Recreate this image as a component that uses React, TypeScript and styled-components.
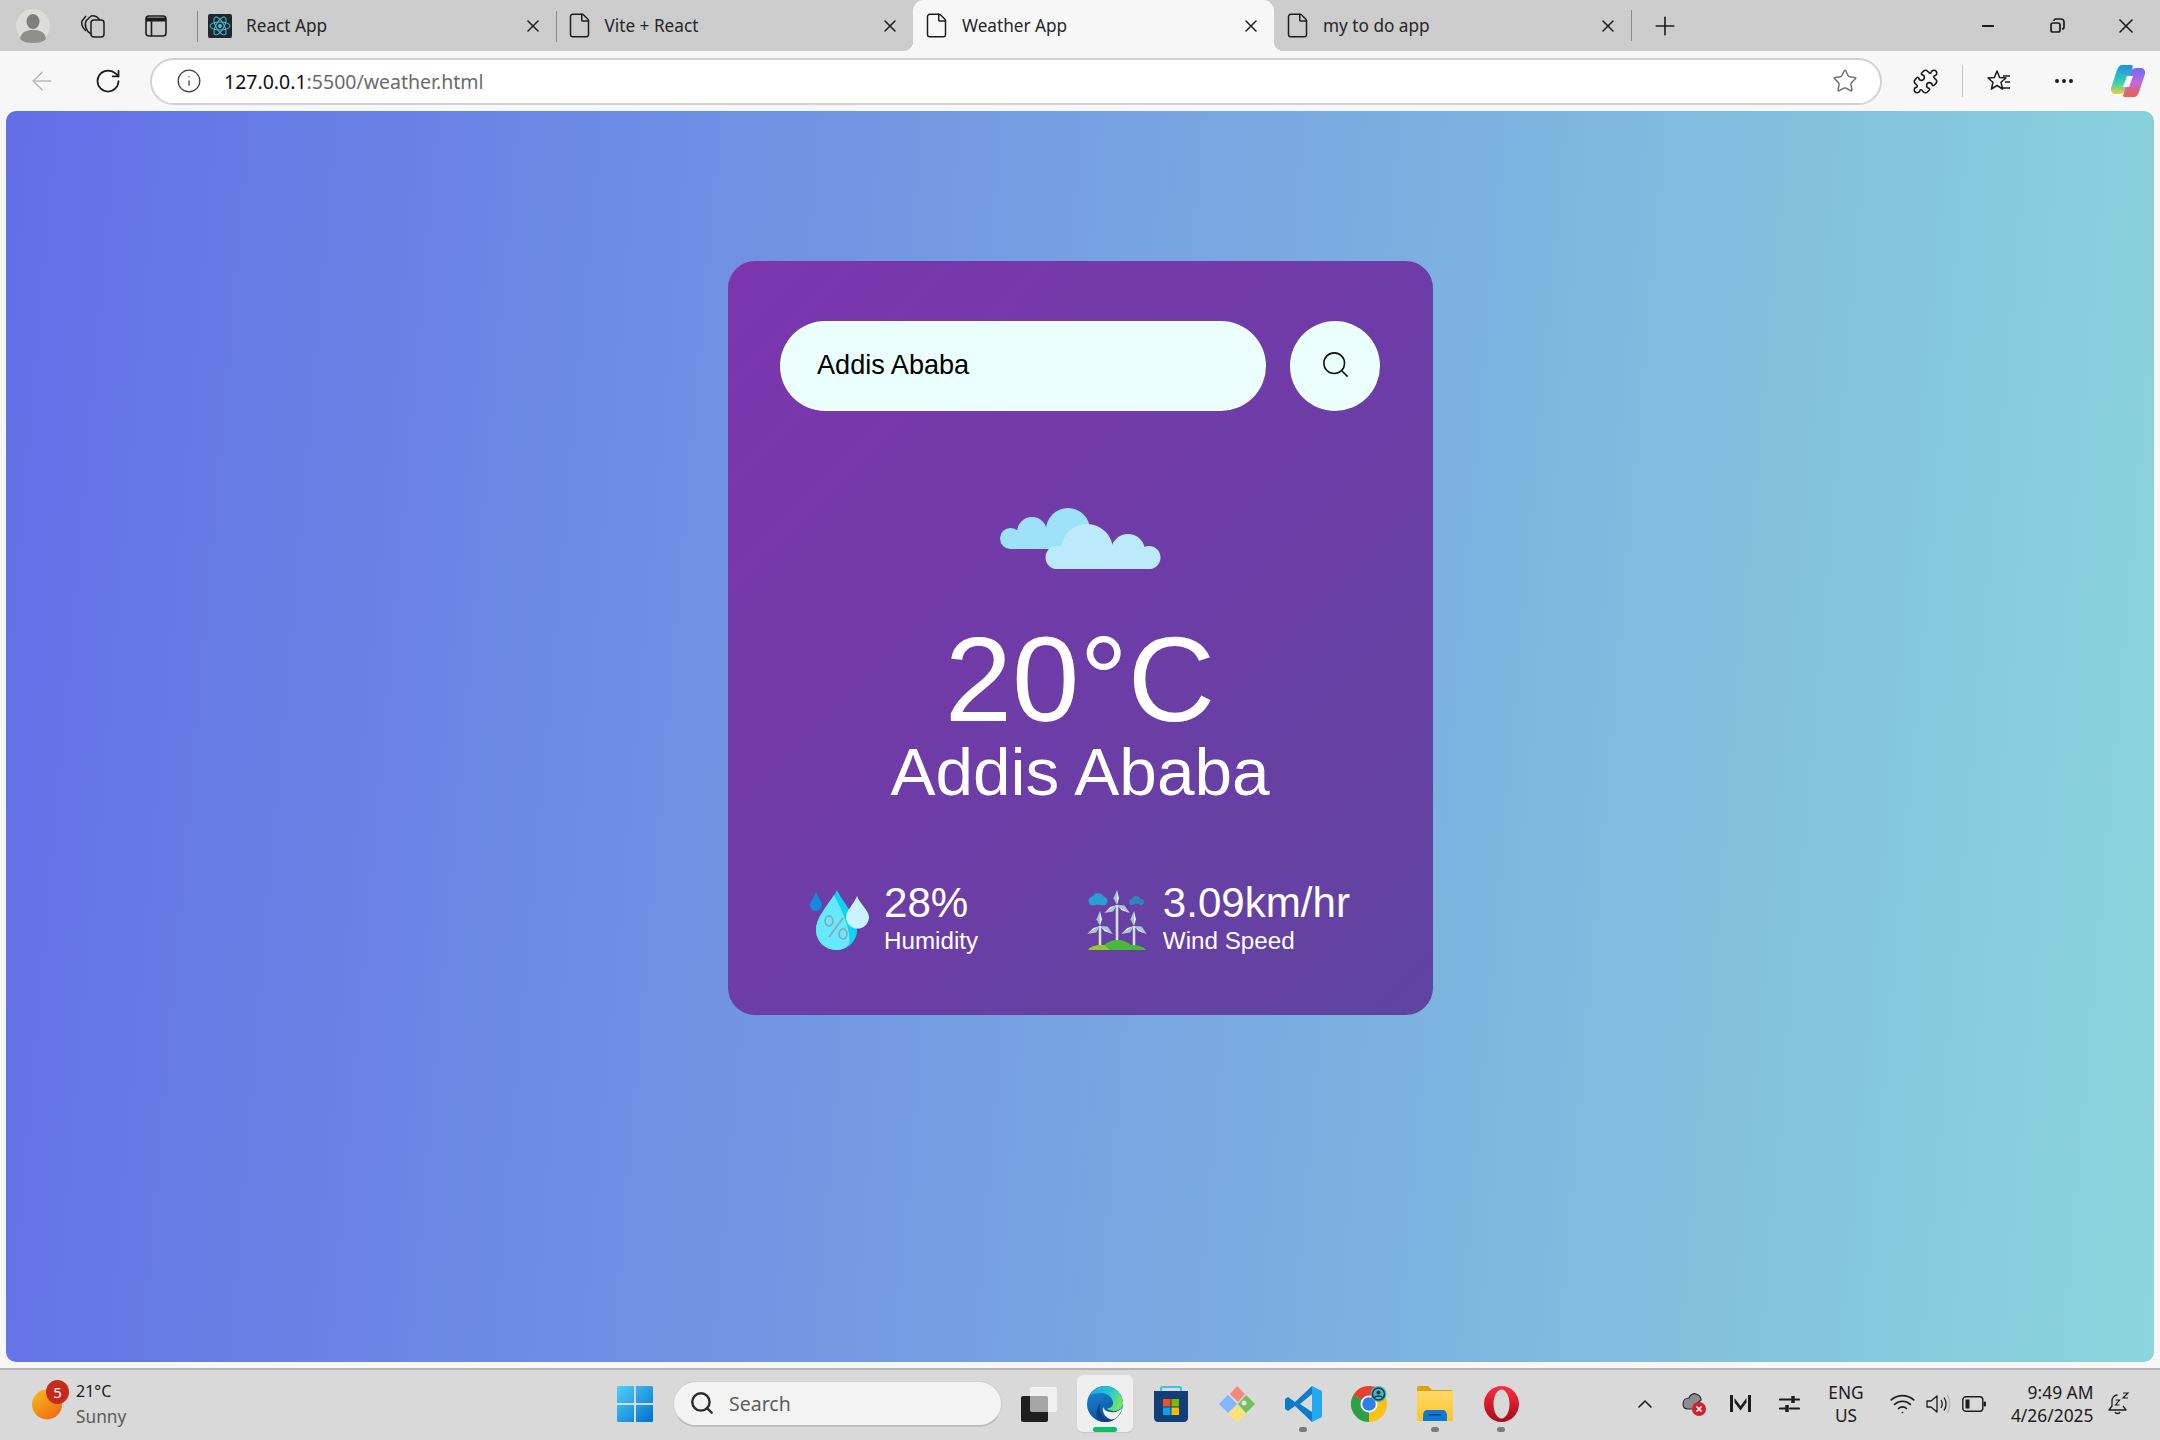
import styled, { createGlobalStyle } from "styled-components";
import {
  ArrowLeft,
  ChevronUp,
  Ellipsis,
  File,
  Info,
  Minus,
  Plus,
  Puzzle,
  RotateCw,
  Search,
  Star,
  Wifi,
  X,
} from "lucide-react";

const GlobalStyle = createGlobalStyle`
  html, body {
    margin: 0;
    padding: 0;
    height: 100%;
  }
  body {
    font-family: "Noto Sans", "Liberation Sans", sans-serif;
    background: #f7f7f7;
  }
`;

const tabs = [
  { id: "react", title: "React App", width: 358.5, active: false, favicon: true },
  { id: "vite", title: "Vite + React", width: 357.5, active: false, favicon: false },
  { id: "weather", title: "Weather App", width: 361, active: true, favicon: false },
  { id: "todo", title: "my to do app", width: 357, active: false, favicon: false },
];

function ReactFavicon() {
  return (
    <svg width="24" height="24" viewBox="0 0 24 24">
      <rect width="24" height="24" rx="2" fill="#20262e" />
      <g fill="none" stroke="#4fc3dc" strokeWidth="1">
        <ellipse cx="12" cy="12" rx="10" ry="4" />
        <ellipse cx="12" cy="12" rx="10" ry="4" transform="rotate(60 12 12)" />
        <ellipse cx="12" cy="12" rx="10" ry="4" transform="rotate(120 12 12)" />
      </g>
      <circle cx="12" cy="12" r="2" fill="#4fc3dc" />
    </svg>
  );
}

function AvatarIcon() {
  return (
    <svg width="34" height="34" viewBox="0 0 34 34">
      <circle cx="17" cy="17" r="17" fill="#dcdcd8" />
      <ellipse cx="17" cy="12.5" rx="6.5" ry="7.5" fill="#7e7e7c" />
      <path d="M4 30c1-7 6-9 13-9s12 2 13 9c-3 3-8 4-13 4s-10-1-13-4z" fill="#8f8f8c" />
    </svg>
  );
}

function CollectionsIcon() {
  return (
    <svg width="26" height="26" viewBox="0 0 26 26" fill="none" stroke="#1c1c1c" strokeWidth="1.5">
      <rect x="11" y="7" width="13" height="17" rx="3" />
      <path d="M11 21c-2-1-4-3-5-6-1-3-1-5 0-7l5-5c2-1 4 0 6 1l3 3" />
      <path d="M6 18C3 15 1 11 2 8l4-5" />
    </svg>
  );
}

function VerticalTabsIcon() {
  return (
    <svg width="22" height="22" viewBox="0 0 22 22" fill="none" stroke="#1c1c1c" strokeWidth="1.6">
      <rect x="1" y="1" width="20" height="20" rx="3" />
      <path d="M1 4.500h20" strokeWidth="4" />
      <path d="M6.500 6v15" />
    </svg>
  );
}

function RestoreIcon() {
  return (
    <svg width="16" height="16" viewBox="0 0 16 16" fill="none" stroke="#1c1c1c" strokeWidth="1.7">
      <rect x="2" y="5" width="9" height="9" rx="2" />
      <path d="M5 3c0-1 1-2 2-2h5c1.500 0 3 1.500 3 3v5c0 1-1 2-2 2" />
    </svg>
  );
}

function FavoritesIcon() {
  return (
    <svg width="26" height="26" viewBox="0 0 26 26" fill="none" stroke="#1c1c1c" strokeWidth="1.5">
      <path d="M11 3l2.600 6.500 6.400.5-5 4.300 1.600 6.700L11 17.500 5.400 21 7 14.300 2 10l6.400-.5z" strokeLinejoin="round" />
      <path d="M17 8h7M19 14h5M16 20h8" />
    </svg>
  );
}

function CopilotIcon() {
  return (
    <svg width="34" height="32" viewBox="0 0 34 32">
      <defs>
        <linearGradient id="copA" x1="0" y1="0" x2="0" y2="1">
          <stop offset="0" stopColor="#1e8fe8" />
          <stop offset="0.6" stopColor="#38d0b0" />
          <stop offset="1" stopColor="#e8d040" />
        </linearGradient>
        <linearGradient id="copB" x1="0" y1="0" x2="0" y2="1">
          <stop offset="0" stopColor="#6a6cf0" />
          <stop offset="0.5" stopColor="#c06ae0" />
          <stop offset="1" stopColor="#f2603c" />
        </linearGradient>
      </defs>
      <path d="M11 0h9c2 0 2 2 1.500 3L14 26c-1 2-3 3-6 3H4c-3 0-4.500-3-4-6L6 5c1-3 3-5 5-5z" fill="url(#copA)" />
      <path d="M23 32h-9c-2 0-2-2-1.500-3L20 6c1-2 3-3 6-3h4c3 0 4.500 3 4 6l-6 18c-1 3-3 5-5 5z" fill="url(#copB)" />
      <path d="M16 11h6l-4 11h-6z" fill="#fff" />
    </svg>
  );
}

function CloudIcon() {
  return (
    <svg width="161" height="61" viewBox="0 0 161 61">
      <g fill="#9ee2fa">
        <circle cx="68" cy="22" r="22" />
        <circle cx="32" cy="24" r="15" />
        <circle cx="10.500" cy="30.500" r="10.500" />
        <circle cx="80" cy="30.500" r="10.500" />
        <rect x="10" y="22" width="70" height="19" />
      </g>
      <g fill="#bbeafb">
        <circle cx="87" cy="42" r="26" />
        <circle cx="128" cy="43" r="17" />
        <circle cx="57" cy="49.500" r="11.500" />
        <circle cx="149" cy="49.500" r="11.500" />
        <rect x="57" y="42" width="92" height="19" />
      </g>
    </svg>
  );
}

function HumidityIcon() {
  return (
    <svg width="60" height="60" viewBox="0 0 60 60">
      <path d="M6 2C8 8 12 11 12 15a6 6 0 0 1-12 0C0 11 4 8 6 2z" fill="#148bdc" />
      <path d="M27 0c5 12 20 25 20 40 0 11-9 20-20 20S6 51 6 40C6 25 22 12 27 0z" fill="#10d2f4" />
      <path d="M24 5C18 15 6 27 6 40c0 11 9 20 20 20 6 0 10-2 13-6 2-8-2-25-15-49z" fill="#66e9ff" />
      <path d="M47 6c3 8 12 15 12 21a11 11 0 0 1-23 0c0-6 8-13 11-21z" fill="#c9f3ff" />
      <g stroke="#8aa8b4" strokeWidth="1.800" fill="none">
        <ellipse cx="19" cy="31" rx="4" ry="5" />
        <ellipse cx="33" cy="44" rx="4" ry="5" />
        <path d="M19 47l14-19" />
      </g>
    </svg>
  );
}

type TurbineProps = { x: number; y: number; bottom: number; size: number };

function Turbine({ x, y, bottom, size }: TurbineProps) {
  const angles = [0, 122, 238];
  return (
    <g>
      <rect x={x - 1.25} y={y} width="2.500" height={bottom - y} fill="#d4e2ea" />
      {angles.map(angle => (
        <g key={angle} transform={`rotate(${angle} ${x} ${y})`}>
          <path d={`M${x} ${y}L${x - 3.500} ${y - size * 0.45}L${x} ${y - size}z`} fill="#a6cbd6" />
          <path d={`M${x} ${y}L${x + 2} ${y - size * 0.45}L${x} ${y - size}z`} fill="#dfecf2" />
        </g>
      ))}
    </g>
  );
}

function WindIcon() {
  return (
    <svg width="60" height="60" viewBox="0 0 60 60">
      <g fill="#2a9fd6">
        <circle cx="6" cy="11" r="4.500" />
        <circle cx="11" cy="9" r="6" />
        <circle cx="16" cy="11" r="4.500" />
      </g>
      <g fill="#2f86b8">
        <circle cx="45" cy="12" r="3" />
        <circle cx="49" cy="10" r="4" />
        <circle cx="54" cy="12" r="3" />
      </g>
      <Turbine x={30} y={15} bottom={52} size={15} />
      <Turbine x={13} y={36} bottom={56} size={15} />
      <Turbine x={47} y={36} bottom={56} size={15} />
      <path d="M1 60c4-5 10-5 16-5 3-3 8-5 13-5s11 2 14 5c6 0 12 1 15 5z" fill="#4ab83c" />
      <path d="M1 60c4-5 10-5 16-5l6 5z" fill="#95c92a" />
    </svg>
  );
}

function WeatherSun() {
  return (
    <svg width="30" height="31" viewBox="0 0 30 31">
      <defs>
        <linearGradient id="sun" x1="0" y1="0" x2="0.700" y2="1">
          <stop offset="0" stopColor="#f6bd22" />
          <stop offset="1" stopColor="#f26c10" />
        </linearGradient>
      </defs>
      <circle cx="15" cy="15.500" r="15" fill="url(#sun)" />
    </svg>
  );
}

function WindowsLogo() {
  return (
    <svg width="36" height="36" viewBox="0 0 36 36">
      <defs>
        <linearGradient id="win" x1="0" y1="0" x2="1" y2="1">
          <stop offset="0" stopColor="#4fd0fb" />
          <stop offset="1" stopColor="#0070cc" />
        </linearGradient>
      </defs>
      <path d="M1.500 0H17v17H0V1.500A1.500 1.500 0 0 1 1.500 0zM19 0h15.500A1.500 1.500 0 0 1 36 1.500V17H19zM0 19h17v17H1.500A1.500 1.500 0 0 1 0 34.500zM19 19h17v15.500a1.500 1.500 0 0 1-1.500 1.500H19z" fill="url(#win)" />
    </svg>
  );
}

function TaskViewIcon() {
  return (
    <svg width="36" height="36" viewBox="0 0 36 36">
      <rect x="0" y="10" width="27" height="26" rx="2" fill="#1f1f1f" />
      <rect x="9" y="1" width="27" height="25" rx="2" fill="#ffffff" fillOpacity="0.6" />
    </svg>
  );
}

function EdgeIcon() {
  return (
    <svg width="36" height="36" viewBox="0 0 36 36">
      <defs>
        <linearGradient id="edgeA" x1="0" y1="0" x2="1" y2="0.500">
          <stop offset="0" stopColor="#1fa6e8" />
          <stop offset="0.600" stopColor="#2bc8c8" />
          <stop offset="1" stopColor="#72e46c" />
        </linearGradient>
        <linearGradient id="edgeB" x1="0" y1="0" x2="0.500" y2="1">
          <stop offset="0" stopColor="#1b8fdc" />
          <stop offset="1" stopColor="#0c4f9c" />
        </linearGradient>
      </defs>
      <circle cx="18" cy="18" r="18" fill="url(#edgeB)" />
      <path d="M3 9C7 3 12 0 18 0c10 0 18 7 18 17 0 5-4 8-9 8-3 0-6-1-7-3 4 0 6-2 6-5 0-5-5-10-12-10C9 7 5 8 3 9z" fill="url(#edgeA)" />
      <path d="M36 21c-3 4-8 6-13 5-3-.500-6-2-7-5-1 5 2 11 9 13 4-1 8-5 11-13z" fill="#f0f0f0" />
      <path d="M14 17c-3 5-1 13 6 16 3 1 6 1 9-1-3 3-7 4-11 4-3 0-6-1-8-3-1-7 0-13 4-16z" fill="#0b3f86" />
    </svg>
  );
}

function StoreIcon() {
  return (
    <svg width="36" height="36" viewBox="0 0 36 36">
      <path d="M8 5V2.500C8 1.500 9 1 10 1h16c1 0 2 .500 2 1.500V5" fill="none" stroke="#35c4f0" strokeWidth="2" />
      <path d="M1 5h34v27c0 2-1.500 4-4 4H5c-2.500 0-4-2-4-4z" fill="#123f78" />
      <rect x="10" y="13" width="7.500" height="7.500" fill="#f25022" />
      <rect x="18.500" y="13" width="7.500" height="7.500" fill="#7fba00" />
      <rect x="10" y="21.500" width="7.500" height="7.500" fill="#00a4ef" />
      <rect x="18.500" y="21.500" width="7.500" height="7.500" fill="#ffb900" />
    </svg>
  );
}

function SnipIcon() {
  return (
    <svg width="36" height="36" viewBox="0 0 36 36">
      <path d="M9 9l9 9-9 9-9-9z" fill="#82b4ff" />
      <path d="M18 0l8 8-7 8-8-8z" fill="#f28a80" />
      <path d="M27 9l9 9-9 9-8-9z" fill="#6fc05a" />
      <path d="M18 19l9 8.500-9 8.500-9-8.500z" fill="#ffe177" />
      <circle cx="25" cy="17" r="2.500" fill="#e4e4e4" />
    </svg>
  );
}

function VsCodeIcon() {
  return (
    <svg width="37" height="36" viewBox="0 0 37 36">
      <path d="M27 0l10 5v26l-10 5z" fill="#23a9f2" />
      <path d="M27 0L10 16 3 11 0 13v10l3 2 7-5 17 16v-10L15 18 27 8z" fill="#0a7ccb" />
    </svg>
  );
}

function ChromeIcon() {
  return (
    <svg width="36" height="36" viewBox="0 0 36 36">
      <circle cx="18" cy="18" r="18" fill="#fbc116" />
      <path d="M18 18L2.400 9A18 18 0 0 1 33.600 9z" fill="#e34133" />
      <path d="M18 18L2.400 9A18 18 0 0 0 18 36z" fill="#2f9e4a" />
      <circle cx="18" cy="18" r="8.500" fill="#fff" />
      <circle cx="18" cy="18" r="6.800" fill="#2f7de8" />
      <circle cx="27.500" cy="8" r="8" fill="#49b7c4" />
      <circle cx="27.500" cy="8" r="6" fill="none" stroke="#183c44" strokeWidth="1.500" />
      <circle cx="27.500" cy="6.500" r="2" fill="#183c44" />
      <path d="M23.500 11.500c1-2 7-2 8 0" fill="none" stroke="#183c44" strokeWidth="1.500" />
    </svg>
  );
}

function FolderIcon() {
  return (
    <svg width="36" height="36" viewBox="0 0 36 36">
      <defs>
        <linearGradient id="folder" x1="0" y1="0" x2="0" y2="1">
          <stop offset="0" stopColor="#ffd964" />
          <stop offset="1" stopColor="#fbc430" />
        </linearGradient>
      </defs>
      <path d="M0 7V2c0-1 1-2 2-2h9l4 4h19c1 0 2 1 2 2v3H0z" fill="#dfa10a" />
      <rect x="0" y="5" width="36" height="30" rx="1" fill="url(#folder)" />
      <path d="M6 35v-6c0-3 2-5 4-5h16c2 0 4 2 4 5v6z" fill="#0f78d0" />
      <rect x="12" y="28" width="12" height="1.500" fill="#083f7a" />
    </svg>
  );
}

function OperaIcon() {
  return (
    <svg width="35" height="36" viewBox="0 0 35 36">
      <defs>
        <linearGradient id="opera" x1="0" y1="0" x2="0" y2="1">
          <stop offset="0" stopColor="#ff2c3e" />
          <stop offset="1" stopColor="#a80a18" />
        </linearGradient>
      </defs>
      <path
        fillRule="evenodd"
        d="M17.500 0C27 0 35 8 35 18s-8 18-17.500 18S0 28 0 18 8 0 17.500 0zm0 3.500c-4.500 0-8 6.500-8 14.500s3.500 14.500 8 14.500 8-6.500 8-14.500-3.500-14.500-8-14.500z"
        fill="url(#opera)"
      />
    </svg>
  );
}

function CloudErrorIcon() {
  return (
    <svg width="25" height="24" viewBox="0 0 25 24">
      <path d="M2 12c0-4 3-6 6-6 1-3 4-5 7-4 3 1 5 3 5 6-3 2-6 5-7 9H7c-3 0-5-2-5-5z" fill="#8d8d8d" stroke="#2a2a2a" strokeWidth="1.200" />
      <circle cx="18" cy="17" r="7" fill="#d3222f" />
      <path d="M15.500 14.500l5 5m0-5l-5 5" stroke="#fff" strokeWidth="1.600" />
    </svg>
  );
}

function MeterIcon() {
  return (
    <svg width="21" height="17" viewBox="0 0 21 17" fill="#1c1c1c">
      <path d="M0 0h3v17H0zM18 0h3v17h-3zM4.500 3l6 8 6-8v4.500l-6 8-6-8z" />
    </svg>
  );
}

function SlidersIcon() {
  return (
    <svg width="21" height="18" viewBox="0 0 21 18" fill="none" stroke="#1c1c1c" strokeWidth="2.200" strokeLinecap="round">
      <path d="M1 4.500h11M1 13.500h5M16 4.500h4M11 13.500h9" />
      <path d="M14 1v7M8 10v7" strokeWidth="3.500" strokeLinecap="butt" />
    </svg>
  );
}

function BatteryIcon() {
  return (
    <svg width="24" height="16" viewBox="0 0 24 16">
      <rect x="0.800" y="0.800" width="20" height="14.400" rx="3" fill="none" stroke="#1c1c1c" strokeWidth="1.400" />
      <rect x="3.500" y="3.500" width="4" height="9" fill="#1c1c1c" />
      <rect x="21.500" y="5.500" width="2.500" height="5" rx="1" fill="#1c1c1c" />
    </svg>
  );
}

function SpeakerIcon() {
  return (
    <svg width="24" height="20" viewBox="0 0 24 20" fill="none" stroke="#1c1c1c" strokeWidth="1.300">
      <path d="M1 7h4l6-5v16l-6-5H1z" strokeLinejoin="round" />
      <path d="M15 6c1.500 2.500 1.500 5.500 0 8M18 3.500c2.500 4 2.500 9 0 13" />
      <path d="M21.500 1c3 5 3 13 0 18" stroke="#b0b0b0" />
    </svg>
  );
}

function SleepBell() {
  return (
    <svg width="22" height="24" viewBox="0 0 22 24" fill="none" stroke="#1c1c1c" strokeWidth="1.300">
      <path d="M9.500 3C6 3 4 6 4 9v5l-3 4h17l-3-4" strokeLinejoin="round" />
      <path d="M7 20c.500 2 4.500 2 5 0" />
      <path d="M7.500 8h4l-4 5h4M15 1h5l-5 5h5" strokeWidth="1.200" />
    </svg>
  );
}

const pinnedApps = [
  { id: "taskview", icon: <TaskViewIcon />, open: false, focused: false },
  { id: "edge", icon: <EdgeIcon />, open: true, focused: true },
  { id: "store", icon: <StoreIcon />, open: false, focused: false },
  { id: "snip", icon: <SnipIcon />, open: false, focused: false },
  { id: "vscode", icon: <VsCodeIcon />, open: true, focused: false },
  { id: "chrome", icon: <ChromeIcon />, open: false, focused: false },
  { id: "folder", icon: <FolderIcon />, open: true, focused: false },
  { id: "opera", icon: <OperaIcon />, open: true, focused: false },
];

export default function App() {
  return (
    <>
      <GlobalStyle />
      <Screen>
        <TabStrip>
          <StripSlot $w={66} $pl={16}>
            <AvatarIcon />
          </StripSlot>
          <StripSlot $w={62} $pl={14}>
            <CollectionsIcon />
          </StripSlot>
          <StripSlot $w={69} $pl={17}>
            <VerticalTabsIcon />
          </StripSlot>
          {tabs.map((tab, index) => (
            <Tab key={tab.id} $width={tab.width} $active={tab.active} $divider={index < 2}>
              {tab.favicon ? (
                <FaviconSlot>
                  <ReactFavicon />
                </FaviconSlot>
              ) : (
                <File size={27} strokeWidth={1.3} color="#1c1c1c" />
              )}
              <TabTitle>{tab.title}</TabTitle>
              <X size={20} strokeWidth={1.8} color="#1c1c1c" />
            </Tab>
          ))}
          <NewTabDivider />
          <NewTab>
            <Plus size={30} strokeWidth={1.3} color="#1c1c1c" />
          </NewTab>
          <WindowButtons>
            <WindowButton>
              <Minus size={18} strokeWidth={2.4} color="#1c1c1c" />
            </WindowButton>
            <WindowButton>
              <RestoreIcon />
            </WindowButton>
            <WindowButton>
              <X size={24} strokeWidth={1.6} color="#1c1c1c" />
            </WindowButton>
          </WindowButtons>
        </TabStrip>

        <Toolbar>
          <ToolSlot>
            <ArrowLeft size={30} strokeWidth={1.2} color="#b9b9b9" />
          </ToolSlot>
          <ToolSlot $ml={18}>
            <RotateCw size={28} strokeWidth={1.5} color="#1c1c1c" />
          </ToolSlot>
          <AddressBar>
            <Info size={26} strokeWidth={1.2} color="#444" />
            <Url>
              127.0.0.1<UrlRest>:5500/weather.html</UrlRest>
            </Url>
            <Star size={26} strokeWidth={1.3} color="#6a6a6a" />
          </AddressBar>
          <ToolSlot $ml={19}>
            <Puzzle size={27} strokeWidth={1.4} color="#1c1c1c" />
          </ToolSlot>
          <ToolDivider />
          <ToolSlot>
            <FavoritesIcon />
          </ToolSlot>
          <ToolSlot $ml={17}>
            <Ellipsis size={24} strokeWidth={2} color="#1c1c1c" />
          </ToolSlot>
          <ToolSlot $ml={16}>
            <CopilotIcon />
          </ToolSlot>
        </Toolbar>

        <Page>
          <Card>
            <SearchRow>
              <SearchInput value="Addis Ababa" readOnly />
              <SearchButton>
                <Search size={31} strokeWidth={1.2} color="#111" />
              </SearchButton>
            </SearchRow>
            <WeatherImage>
              <CloudIcon />
            </WeatherImage>
            <Temperature>20°C</Temperature>
            <City>Addis Ababa</City>
            <Details>
              <Detail $gap={14}>
                <HumidityIcon />
                <div>
                  <DetailValue>28%</DetailValue>
                  <DetailLabel>Humidity</DetailLabel>
                </div>
              </Detail>
              <Detail $gap={16}>
                <WindIcon />
                <div>
                  <DetailValue>3.09km/hr</DetailValue>
                  <DetailLabel>Wind Speed</DetailLabel>
                </div>
              </Detail>
            </Details>
          </Card>
        </Page>

        <Taskbar>
          <WeatherWidget>
            <SunWrap>
              <WeatherSun />
              <Badge>5</Badge>
            </SunWrap>
            <WidgetText>
              <WidgetTemp>21°C</WidgetTemp>
              <WidgetState>Sunny</WidgetState>
            </WidgetText>
          </WeatherWidget>
          <WindowsLogo />
          <TaskSearch>
            <Search size={26} strokeWidth={2.2} color="#2a2a2a" />
            <TaskSearchText>Search</TaskSearchText>
          </TaskSearch>
          <AppList>
            {pinnedApps.map(app => (
              <AppSlot key={app.id} $focused={app.focused}>
                {app.icon}
                {app.open && <AppDot $focused={app.focused} />}
              </AppSlot>
            ))}
          </AppList>
          <Tray>
            <TraySlot $w={48}>
              <ChevronUp size={24} strokeWidth={1.6} color="#1c1c1c" />
            </TraySlot>
            <TraySlot $w={48}>
              <CloudErrorIcon />
            </TraySlot>
            <TraySlot $w={46}>
              <MeterIcon />
            </TraySlot>
            <TraySlot $w={52}>
              <SlidersIcon />
            </TraySlot>
            <LangBlock>
              <span>ENG</span>
              <span>US</span>
            </LangBlock>
            <TraySlot $w={42}>
              <Wifi size={27} strokeWidth={1.5} color="#1c1c1c" />
            </TraySlot>
            <TraySlot $w={29}>
              <SpeakerIcon />
            </TraySlot>
            <TraySlot $w={44}>
              <BatteryIcon />
            </TraySlot>
            <Clock>
              <span>9:49 AM</span>
              <span>4/26/2025</span>
            </Clock>
            <TraySlot $w={51}>
              <SleepBell />
            </TraySlot>
          </Tray>
        </Taskbar>
      </Screen>
    </>
  );
}

const Screen = styled.div`
  display: flex;
  flex-direction: column;
  height: 100vh;
  overflow: hidden;
  background: #f7f7f7;
`;

const TabStrip = styled.div`
  display: flex;
  align-items: stretch;
  height: 51px;
  flex: none;
  background: #cccccc;
`;

const StripSlot = styled.div<{ $w: number; $pl: number }>`
  display: flex;
  align-items: center;
  width: ${p => p.$w}px;
  padding-left: ${p => p.$pl}px;
  box-sizing: border-box;
  flex: none;
`;

const Tab = styled.div<{ $width: number; $active: boolean; $divider: boolean }>`
  position: relative;
  display: flex;
  align-items: center;
  width: ${p => p.$width}px;
  flex: none;
  box-sizing: border-box;
  padding: 0 13px 0 10px;
  gap: 12px;
  background: ${p => (p.$active ? "#f7f7f7" : "transparent")};
  border-radius: ${p => (p.$active ? "11px 11px 0 0" : "0")};

  ${p =>
    p.$divider &&
    `
    &::before {
      content: "";
      position: absolute;
      left: 0;
      top: 11px;
      height: 31px;
      width: 1px;
      background: #8a8a8a;
    }
  `}

  ${p =>
    p.$active &&
    `
    &::before, &::after {
      content: "";
      position: absolute;
      bottom: 0;
      width: 10px;
      height: 10px;
    }
    &::before {
      left: -10px;
      background: radial-gradient(circle at 0 0, transparent 10px, #f7f7f7 10.500px);
    }
    &::after {
      right: -10px;
      background: radial-gradient(circle at 100% 0, transparent 10px, #f7f7f7 10.500px);
    }
  `}
`;

const FaviconSlot = styled.span`
  display: flex;
  margin: 0 2px 0 1px;
`;

const TabTitle = styled.span`
  flex: 1;
  font-size: 17.200px;
  color: #262626;
  white-space: nowrap;
`;

const NewTabDivider = styled.div`
  width: 1px;
  height: 31px;
  align-self: center;
  background: #8a8a8a;
  flex: none;
`;

const NewTab = styled.div`
  display: flex;
  align-items: center;
  justify-content: center;
  width: 44px;
  margin-left: 11px;
  flex: none;
`;

const WindowButtons = styled.div`
  display: flex;
  margin-left: auto;
`;

const WindowButton = styled.div`
  display: flex;
  align-items: center;
  justify-content: center;
  width: 69px;
`;

const Toolbar = styled.div`
  display: flex;
  align-items: center;
  height: 60px;
  flex: none;
  padding-left: 18px;
  background: #f7f7f7;
`;

const ToolSlot = styled.div<{ $ml?: number }>`
  display: flex;
  align-items: center;
  justify-content: center;
  width: 48px;
  height: 48px;
  flex: none;
  margin-left: ${p => p.$ml ?? 0}px;
`;

const ToolDivider = styled.div`
  width: 1px;
  height: 32px;
  margin: 0 12px 0 13px;
  background: #c6c6c6;
  flex: none;
`;

const AddressBar = styled.div`
  display: flex;
  align-items: center;
  width: 1732px;
  height: 47px;
  margin-left: 18px;
  padding: 0 22px 0 24px;
  box-sizing: border-box;
  flex: none;
  background: #ffffff;
  border: 2px solid #d2d2d2;
  border-radius: 24px;
`;

const Url = styled.div`
  flex: 1;
  margin-left: 22px;
  font-size: 19.500px;
  color: #111;
`;

const UrlRest = styled.span`
  color: #6b6b6b;
`;

const Page = styled.main`
  flex: 1;
  display: flex;
  flex-direction: column;
  align-items: center;
  margin: 0 6px 6px;
  padding-top: 150px;
  border-radius: 10px;
  background: linear-gradient(95deg, #626fe7, #8bd5dc);
`;

const Card = styled.section`
  width: 705px;
  height: 754px;
  box-sizing: border-box;
  padding: 60px 52.500px 0;
  border-radius: 27px;
  font-family: "Liberation Sans", Arial, sans-serif;
  color: #ffffff;
  text-align: center;
  background: linear-gradient(135deg, #7d35ae, #5f44a0);
`;

const SearchRow = styled.div`
  display: flex;
  justify-content: space-between;
`;

const SearchInput = styled.input`
  width: 486px;
  height: 90px;
  box-sizing: border-box;
  padding: 0 37px 2px;
  border: 0;
  outline: 0;
  border-radius: 45px;
  background: #ebfffc;
  color: #000;
  font-family: inherit;
  font-size: 27.100px;
`;

const SearchButton = styled.button`
  display: flex;
  align-items: center;
  justify-content: center;
  width: 90px;
  height: 90px;
  padding: 0 0 3px;
  border: 0;
  border-radius: 50%;
  background: #ebfffc;
`;

const WeatherImage = styled.div`
  display: flex;
  justify-content: center;
  margin-top: 97px;
  height: 61px;
`;

const Temperature = styled.div`
  margin-top: 50px;
  font-size: 121px;
  line-height: 1;
`;

const City = styled.div`
  margin-top: -2.500px;
  font-size: 67.500px;
  line-height: 1;
`;

const Details = styled.div`
  display: flex;
  justify-content: space-between;
  align-items: flex-end;
  margin-top: 77px;
  padding: 0 30px;
  text-align: left;

  svg {
    margin-bottom: 3px;
  }
`;

const Detail = styled.div<{ $gap: number }>`
  display: flex;
  align-items: flex-end;
  gap: ${p => p.$gap}px;
`;

const DetailValue = styled.div`
  font-size: 42.100px;
  line-height: 1;
`;

const DetailLabel = styled.div`
  margin-top: 5px;
  font-size: 24.200px;
  line-height: 1;
`;

const Taskbar = styled.footer`
  display: flex;
  align-items: center;
  height: 72px;
  flex: none;
  padding-bottom: 3px;
  box-sizing: border-box;
  border-top: 2px solid #b4b4b4;
  background: #d9d9d9;
`;

const WeatherWidget = styled.div`
  display: flex;
  align-items: center;
  width: 617px;
  padding-left: 32px;
  box-sizing: border-box;
  flex: none;
`;

const SunWrap = styled.div`
  position: relative;
  display: flex;
  width: 30px;
  height: 31px;
  margin-top: 2px;
`;

const Badge = styled.span`
  position: absolute;
  left: 14px;
  top: -9px;
  width: 23px;
  height: 24px;
  border-radius: 50%;
  background: #c42b1c;
  color: #fff;
  font-size: 15px;
  line-height: 24px;
  text-align: center;
`;

const WidgetText = styled.div`
  margin-left: 14px;
  font-size: 16px;
  line-height: 25px;
`;

const WidgetTemp = styled.div`
  color: #1c1c1c;
`;

const WidgetState = styled.div`
  font-size: 17.300px;
  color: #5c5c5c;
`;

const TaskSearch = styled.div`
  display: flex;
  align-items: center;
  width: 329px;
  height: 46px;
  margin-left: 20px;
  padding-left: 15px;
  box-sizing: border-box;
  flex: none;
  border-radius: 23px;
  background: #f3f3f3;
  border: 1px solid #cfcfcf;
  border-bottom: 2px solid #bdbdbd;
`;

const TaskSearchText = styled.span`
  margin-left: 14px;
  font-size: 19.500px;
  color: #5d5d5d;
`;

const AppList = styled.div`
  display: flex;
  margin-left: 4px;
  flex: none;
`;

const AppSlot = styled.div<{ $focused: boolean }>`
  position: relative;
  display: flex;
  align-items: center;
  justify-content: center;
  width: ${p => (p.$focused ? "56px" : "66px")};
  height: 57px;
  margin: ${p => (p.$focused ? "0 5px" : "0")};
  border-radius: 6px;
  background: ${p => (p.$focused ? "#efefef" : "transparent")};
  box-shadow: ${p => (p.$focused ? "0 1px 1px #c4c4c4" : "none")};
`;

const AppDot = styled.span<{ $focused: boolean }>`
  position: absolute;
  left: 50%;
  bottom: 0;
  width: ${p => (p.$focused ? "24px" : "8px")};
  height: 5px;
  border-radius: 3px;
  transform: translateX(-50%);
  background: ${p => (p.$focused ? "#06c167" : "#7a7a7a")};
`;

const Tray = styled.div`
  display: flex;
  align-items: center;
  margin-left: 87px;
  flex: none;
`;

const TraySlot = styled.div<{ $w: number }>`
  display: flex;
  align-items: center;
  justify-content: center;
  width: ${p => p.$w}px;
  flex: none;
`;

const LangBlock = styled.div`
  display: flex;
  flex-direction: column;
  align-items: center;
  width: 62px;
  margin-right: 4px;
  flex: none;
  font-size: 17.300px;
  line-height: 23px;
  color: #1c1c1c;
`;

const Clock = styled.div`
  display: flex;
  flex-direction: column;
  align-items: flex-end;
  width: 97.500px;
  flex: none;
  font-size: 17.400px;
  line-height: 23px;
  color: #1c1c1c;
`;
